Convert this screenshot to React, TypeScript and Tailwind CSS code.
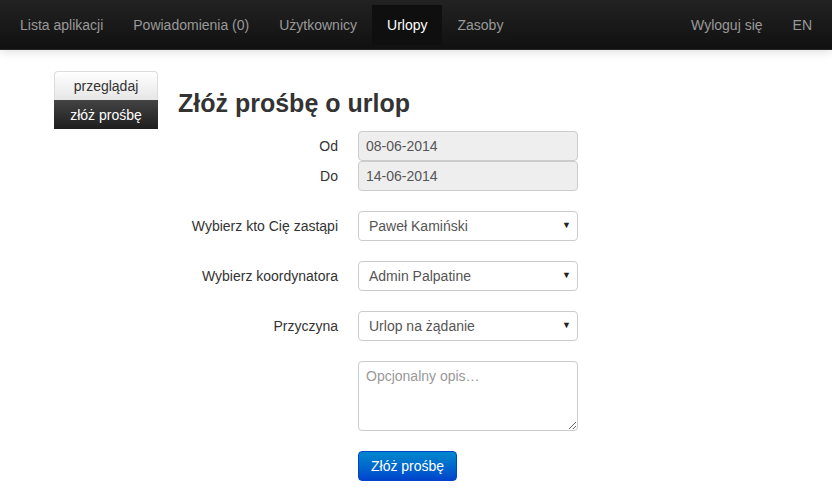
import React from "react";

function Select({ value }: { value: string }) {
  return (
    <div className="relative w-[220px] h-[30px] rounded-[4px] border border-[#ccc] bg-white flex items-center pl-[10px] text-[14px] text-[#555]">
      <span>{value}</span>
      <span className="absolute right-[6px] top-[7px] text-[9px] leading-[12px] text-[#222]">▼</span>
    </div>
  );
}

export default function App() {
  const navLeft = ["Lista aplikacji", "Powiadomienia (0)", "Użytkownicy", "Urlopy", "Zasoby"];
  return (
    <div className="w-[832px] h-[500px] bg-white text-[#333] text-[14px] leading-[20px] overflow-hidden" style={{ fontFamily: '"Liberation Sans", Arial, sans-serif' }}>
      <div className="h-[50px] bg-gradient-to-b from-[#222] to-[#111] shadow-[0_1px_10px_rgba(0,0,0,0.15)] border-b border-[#252525] flex justify-between px-[5px]">
        <div className="flex">
          {navLeft.map((t) => (
            <div key={t} className={`mt-[5px] h-[40px] px-[15px] flex items-center ${t === "Urlopy" ? "bg-[#0f0f0f] text-white" : "text-[#999]"}`}>
              {t}
            </div>
          ))}
        </div>
        <div className="flex">
          {["Wyloguj się", "EN"].map((t) => (
            <div key={t} className="mt-[5px] h-[40px] px-[15px] flex items-center text-[#999]">{t}</div>
          ))}
        </div>
      </div>
      <div className="flex pt-[21px] pl-[54px]">
        <div className="w-[104px] flex flex-col">
          <div className="h-[29px] rounded-t-[4px] border border-[#ddd] border-b-0 bg-gradient-to-b from-white to-[#e6e6e6] flex items-center justify-center text-[#333]">przeglądaj</div>
          <div className="h-[29px] bg-gradient-to-b from-[#444] to-[#1e1e1e] flex items-center justify-center text-white">złóż prośbę</div>
        </div>
        <div className="ml-[20px] flex flex-col">
          <h1 className="text-[25px] leading-[30px] font-bold text-[#333] mt-[17px] mb-[13px]">Złóż prośbę o urlop</h1>
          <div className="flex flex-col">
            <div className="flex items-center">
              <div className="w-[160px] text-right pr-[0px]">Od</div>
              <div className="ml-[20px] w-[220px] h-[30px] rounded-[4px] border border-[#ccc] bg-[#eee] flex items-center pl-[7px] text-[#555]">08-06-2014</div>
            </div>
            <div className="flex items-center">
              <div className="w-[160px] text-right">Do</div>
              <div className="ml-[20px] w-[220px] h-[30px] rounded-[4px] border border-[#ccc] bg-[#eee] flex items-center pl-[7px] text-[#555]">14-06-2014</div>
            </div>
            <div className="flex items-center mt-[20px]">
              <div className="w-[160px] text-right">Wybierz kto Cię zastąpi</div>
              <div className="ml-[20px]"><Select value="Paweł Kamiński" /></div>
            </div>
            <div className="flex items-center mt-[20px]">
              <div className="w-[160px] text-right">Wybierz koordynatora</div>
              <div className="ml-[20px]"><Select value="Admin Palpatine" /></div>
            </div>
            <div className="flex items-center mt-[20px]">
              <div className="w-[160px] text-right">Przyczyna</div>
              <div className="ml-[20px]"><Select value="Urlop na żądanie" /></div>
            </div>
            <div className="flex mt-[20px]">
              <div className="w-[160px]" />
              <textarea
                placeholder="Opcjonalny opis…"
                className="ml-[20px] w-[220px] h-[70px] rounded-[4px] border border-[#ccc] bg-white px-[7px] py-[4px] text-[14px] leading-[20px] text-[#555] placeholder:text-[#999] outline-none"
                style={{ fontFamily: '"Liberation Sans", Arial, sans-serif' }}
              />
            </div>
            <div className="flex mt-[20px]">
              <div className="w-[160px]" />
              <button className="ml-[20px] h-[30px] px-[12px] rounded-[4px] border border-[#04c] bg-gradient-to-b from-[#08c] to-[#04c] text-white text-[14px]" style={{ fontFamily: '"Liberation Sans", Arial, sans-serif' }}>
                Złóż prośbę
              </button>
            </div>
          </div>
        </div>
      </div>
    </div>
  );
}
